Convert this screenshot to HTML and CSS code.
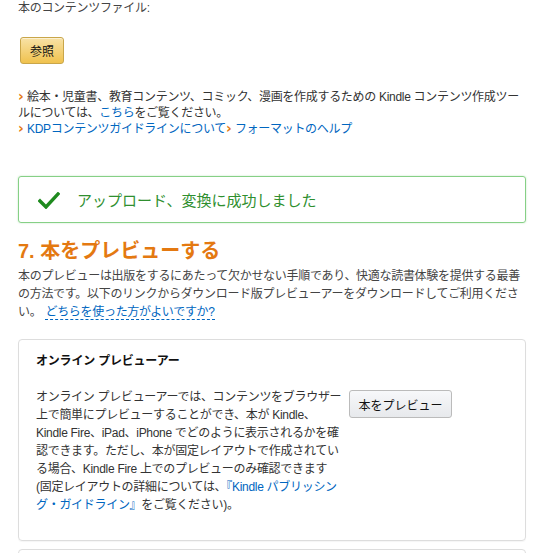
FILE: index.html
```html
<!DOCTYPE html>
<html lang="ja">
<head>
<meta charset="utf-8">
<link rel="stylesheet" href="styles.css">
</head>
<body>
<div class="page">
  <p class="label">本のコンテンツファイル:</p>
  <div class="browse-row"><button class="btn-gold">参照</button></div>
  <ul class="links">
    <li><span class="arr">›</span>絵本・児童書、教育コンテンツ、コミック、漫画を作成するための Kindle コンテンツ作成ツールについては、<a href="#">こちら</a>をご覧ください。</li>
    <li><span class="arr">›</span><a href="#">KDPコンテンツガイドラインについて</a><span class="arr">›</span><a href="#">フォーマットのヘルプ</a></li>
  </ul>
  <div class="success">
    <svg class="check" width="22" height="17" viewBox="0 0 22 17"><path d="M2 9 L8 15 L20 2" fill="none" stroke="#1e8a1e" stroke-width="3.4" stroke-linecap="square"/></svg>
    <span>アップロード、変換に成功しました</span>
  </div>
  <h2 class="step">7. 本をプレビューする</h2>
  <p class="intro">本のプレビューは出版をするにあたって欠かせない手順であり、快適な読書体験を提供する最善の方法です。以下のリンクからダウンロード版プレビューアーをダウンロードしてご利用ください。 <a href="#" class="dotted">どちらを使った方がよいですか?</a></p>
  <div class="card">
    <h3 class="card-title">オンライン プレビューアー</h3>
    <div class="card-body">
      <p class="card-text">オンライン プレビューアーでは、コンテンツをブラウザー上で簡単にプレビューすることができ、本が Kindle、Kindle Fire、iPad、iPhone でどのように表示されるかを確認できます。ただし、本が固定レイアウトで作成されている場合、Kindle Fire 上でのプレビューのみ確認できます<br>(固定レイアウトの詳細については、<a href="#">『Kindle パブリッシング・ガイドライン』</a>をご覧ください)。</p>
      <button class="btn-grey">本をプレビュー</button>
    </div>
  </div>
  <div class="card next"></div>
</div>
</body>
</html>
```
FILE: styles.css
```css
html, body { margin: 0; padding: 0; background: #fff; }
body {
  font-family: "Liberation Sans", "Noto Sans CJK JP", sans-serif;
  font-size: 12px;
  color: #333;
  letter-spacing: -0.3px;
}
.page { width: 508px; padding-left: 18px; }
p { margin: 0; }
a { color: #0066c0; text-decoration: none; }
.label { line-height: 16px; color: #444; }
.browse-row { padding-top: 21px; padding-left: 2px; }
.btn-gold {
  font-family: inherit; font-size: 12px; color: #111; letter-spacing: 0;
  width: 44px; height: 27px; padding: 0;
  border: 1px solid #c9a64a; border-radius: 3px;
  background: linear-gradient(#f8e2a6, #f0c24e);
  box-shadow: inset 0 1px 0 rgba(255,255,255,.5);
}
.links { list-style: none; margin: 25px 0 0; padding: 0; line-height: 16px; }
.arr {
  display: inline-block; width: 9px;
  color: #e47911; font-weight: bold; font-size: 14px; line-height: 12px;
  font-family: "DejaVu Sans", sans-serif;
}
.success {
  margin-top: 39px;
  height: 45px;
  border: 1px solid #86d086;
  border-radius: 3px;
  display: flex; align-items: center;
  padding-left: 19px;
  color: #2f8f2f;
  font-size: 15px;
  letter-spacing: 0;
  box-shadow: 0 0 2px rgba(100,190,100,.4);
}
.check { margin-right: 17px; margin-top: 1px; }
.step {
  margin: 15px 0 0; font-size: 20px; line-height: 26px; font-weight: bold;
  color: #e47911; letter-spacing: 0;
}
.intro { margin-top: 3px; line-height: 18px; color: #444; }
.dotted { border-bottom: 1px dashed #0066c0; margin-left: 1px; }
.card {
  margin-top: 18px;
  border: 1px solid #ddd; border-radius: 4px;
  padding: 12px 17px 26px;
  box-shadow: 0 1px 1px rgba(0,0,0,.04);
}
.card-title { margin: 0; font-size: 12px; line-height: 18px; font-weight: bold; color: #111; letter-spacing: -0.2px; }
.card-body { display: flex; align-items: flex-start; gap: 3px; margin-top: 18px; }
.card-text { width: 310px; line-height: 18px; color: #333; line-break: strict; }
.btn-grey {
  margin-top: 2px;
  font-family: inherit; font-size: 12px; color: #111; letter-spacing: 0;
  width: 103px; height: 28px; padding: 0;
  border: 1px solid #bbb; border-radius: 3px;
  background: linear-gradient(#f7f8fa, #e7e9ec);
}
.next { margin-top: 8px; height: 20px; padding: 0; }
```
